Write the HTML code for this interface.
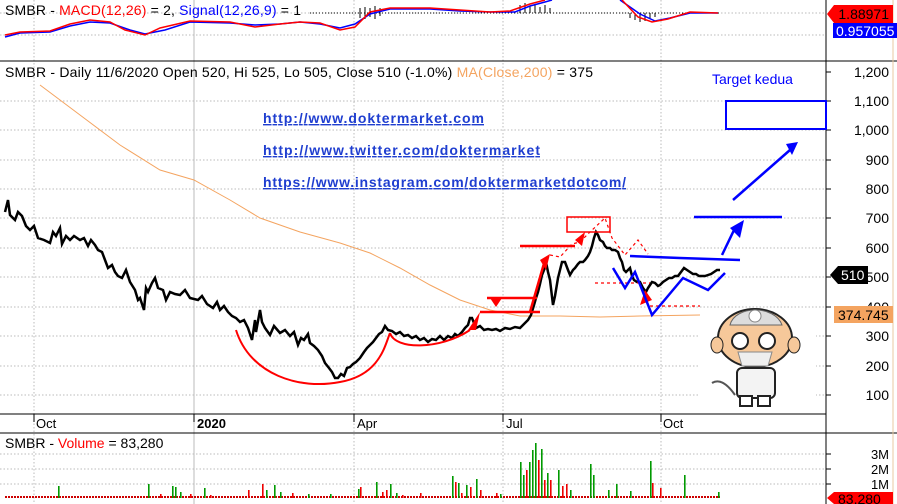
<!DOCTYPE html>
<html><head><meta charset="utf-8"><style>
html,body{margin:0;padding:0;background:#fff;}
svg{display:block;font-family:"Liberation Sans",Arial,sans-serif;}
</style></head><body>
<svg width="897" height="504" viewBox="0 0 897 504" xmlns="http://www.w3.org/2000/svg">
<rect width="897" height="504" fill="#fff"/>
<g stroke="#bbb" stroke-dasharray="1.5,2" stroke-width="1">
<line x1="34" y1="0" x2="34" y2="504"/><line x1="354" y1="0" x2="354" y2="504"/>
<line x1="503" y1="0" x2="503" y2="504"/><line x1="661" y1="0" x2="661" y2="504"/>
<line x1="0" y1="13" x2="826" y2="13"/><line x1="0" y1="35" x2="826" y2="35"/>
<line x1="0" y1="101" x2="826" y2="101"/><line x1="0" y1="130" x2="826" y2="130"/>
<line x1="0" y1="160" x2="826" y2="160"/><line x1="0" y1="189" x2="826" y2="189"/>
<line x1="0" y1="218" x2="826" y2="218"/><line x1="0" y1="248" x2="826" y2="248"/>
<line x1="0" y1="277" x2="826" y2="277"/><line x1="0" y1="307" x2="826" y2="307"/>
<line x1="0" y1="336" x2="826" y2="336"/><line x1="0" y1="366" x2="826" y2="366"/>
<line x1="0" y1="395" x2="826" y2="395"/>
<line x1="0" y1="454" x2="826" y2="454"/><line x1="0" y1="469" x2="826" y2="469"/><line x1="0" y1="484" x2="826" y2="484"/>
</g>
<line x1="194" y1="0" x2="194" y2="504" stroke="#bbb"/>
<line x1="0" y1="61" x2="897" y2="61" stroke="#000"/>
<line x1="0" y1="414" x2="826" y2="414" stroke="#000"/>
<line x1="0" y1="433" x2="897" y2="433" stroke="#000"/>
<line x1="826" y1="0" x2="826" y2="504" stroke="#000"/>
<line x1="893" y1="0" x2="893" y2="504" stroke="#e8c9a0"/>
<!-- MACD -->
<line x1="310" y1="13" x2="720" y2="13" stroke="#000" stroke-dasharray="1,2"/>
<g stroke="#000" stroke-width="1">
<line x1="360" y1="8" x2="360" y2="18"/><line x1="365" y1="7" x2="365" y2="19"/><line x1="370" y1="8" x2="370" y2="17"/><line x1="375" y1="6" x2="375" y2="19"/><line x1="380" y1="8" x2="380" y2="16"/>
<line x1="520" y1="5" x2="520" y2="13"/><line x1="525" y1="3" x2="525" y2="13"/><line x1="530" y1="6" x2="530" y2="13"/><line x1="535" y1="4" x2="535" y2="13"/><line x1="540" y1="7" x2="540" y2="13"/><line x1="545" y1="5" x2="545" y2="13"/><line x1="550" y1="8" x2="550" y2="13"/>
<line x1="630" y1="13" x2="630" y2="18"/><line x1="635" y1="13" x2="635" y2="20"/><line x1="640" y1="13" x2="640" y2="22"/><line x1="645" y1="13" x2="645" y2="21"/><line x1="650" y1="13" x2="650" y2="19"/><line x1="655" y1="13" x2="655" y2="17"/>
</g>
<polyline fill="none" stroke="#00f" stroke-width="1.5" points="5,37 20,33 50,32 70,26 90,22 110,23 130,30 145,34 165,30 190,22 230,23 255,25 280,24 300,22 320,24 340,28 355,24 370,14 390,9 430,9 460,11 490,12 515,12 530,6 545,2 552,0"/>
<polyline fill="none" stroke="#f00" stroke-width="1.5" points="5,35 20,32 50,31 70,24 90,20 110,22 125,30 145,35 160,28 190,21 230,22 255,27 280,24 300,22 320,23 340,30 355,27 370,12 390,8 430,8 460,10 490,12 510,11 530,4 545,0"/>
<polyline fill="none" stroke="#00f" stroke-width="1.5" points="620,0 640,14 655,21 670,18 690,13 718,13"/>
<polyline fill="none" stroke="#f00" stroke-width="1.5" points="622,0 638,17 652,22 668,19 690,12 718,13"/>
<text x="5" y="15" font-size="14" fill="#000" textLength="296">SMBR - <tspan fill="#f00">MACD(12,26)</tspan> = 2, <tspan fill="#00f">Signal(12,26,9)</tspan> = 1</text>
<polygon points="834,5 893,5 893,23 834,23 827,14" fill="#f00"/>
<text x="889" y="19" font-size="14" fill="#000" text-anchor="end">1.88971</text>
<rect x="833" y="23" width="64" height="15" fill="#00f"/>
<text x="836" y="36" font-size="14" fill="#fff">0.957055</text>
<text x="5" y="77" font-size="14" fill="#000" textLength="588">SMBR - Daily 11/6/2020 Open 520, Hi 525, Lo 505, Close 510 (-1.0%) <tspan fill="#f4a460">MA(Close,200)</tspan> = 375</text>
<g font-size="14" fill="#000" text-anchor="end">
<text x="889" y="77">1,200</text><text x="889" y="106">1,100</text><text x="889" y="135">1,000</text>
<text x="889" y="165">900</text><text x="889" y="194">800</text><text x="889" y="223">700</text>
<text x="889" y="253">600</text><text x="889" y="282">500</text><text x="889" y="312">400</text>
<text x="889" y="341">300</text><text x="889" y="371">200</text><text x="889" y="400">100</text>
</g>
<g stroke="#000"><line x1="826" y1="72" x2="831" y2="72"/><line x1="826" y1="101" x2="831" y2="101"/><line x1="826" y1="130" x2="831" y2="130"/><line x1="826" y1="160" x2="831" y2="160"/><line x1="826" y1="189" x2="831" y2="189"/><line x1="826" y1="218" x2="831" y2="218"/><line x1="826" y1="248" x2="831" y2="248"/><line x1="826" y1="277" x2="831" y2="277"/><line x1="826" y1="307" x2="831" y2="307"/><line x1="826" y1="336" x2="831" y2="336"/><line x1="826" y1="366" x2="831" y2="366"/><line x1="826" y1="395" x2="831" y2="395"/></g>
<polygon points="838,266 868,266 868,284 838,284 830,275" fill="#000"/>
<text x="841" y="280" font-size="14" fill="#fff">510</text>
<rect x="834" y="306" width="59" height="17" fill="#f4a460"/>
<text x="838" y="320" font-size="14" fill="#000">374.745</text>
<g font-size="14" font-weight="bold" fill="#1f3ed0" text-decoration="underline">
<text x="263" y="123" textLength="221">http://www.doktermarket.com</text>
<text x="263" y="155" textLength="277">http://www.twitter.com/doktermarket</text>
<text x="263" y="187" textLength="363">https://www.instagram.com/doktermarketdotcom/</text>
</g>
<text x="712" y="84" font-size="14" fill="#00f">Target kedua</text>
<rect x="726" y="101" width="100" height="28" fill="none" stroke="#00f" stroke-width="2"/>
<polyline fill="none" stroke="#f4a460" stroke-width="1" points="40,85 80,115 120,145 160,170 194,180 230,200 260,218 300,232 340,243 370,253 400,268 430,285 460,300 490,310 520,316 560,316 600,317 640,316 700,315"/>
<polyline fill="none" stroke="#000" stroke-width="2.5" points="5,212 8,200 10,215 15,220 18,212 22,216 26,226 30,230 34,226 38,238 44,240 50,243 53,232 56,236 60,228 62,244 66,236 70,240 74,236 80,240 84,238 88,246 91,240 95,245 98,250 102,252 105,260 108,268 112,265 115,272 118,276 122,278 126,270 130,282 135,290 138,300 140,298 144,310 146,288 148,292 152,283 155,278 158,288 163,290 166,300 170,292 175,294 180,295 185,290 190,298 198,300 202,296 207,304 213,308 217,302 220,310 224,306 228,312 232,316 236,318 240,322 244,320 248,328 252,340 255,320 256,332 260,310 262,322 265,328 270,335 274,326 280,333 285,330 290,336 294,332 298,345 301,338 304,340 308,334 310,343 314,346 318,350 322,356 325,363 329,368 332,372 335,378 338,378 341,374 344,376 347,368 350,367 353,364 356,362 360,358 364,352 367,348 370,345 373,342 376,338 379,334 382,332 385,326 388,330 392,331 396,334 400,332 404,336 408,335 412,338 416,336 420,340 424,338 428,342 432,339 436,340 440,336 444,340 448,336 452,338 455,334 458,336 462,332 465,328 468,325 470,318 472,318 476,328 480,326 484,330 488,329 492,330 496,329 500,331 505,328 510,329 515,327 520,328 524,324 528,320 531,315 534,305 536,298 538,292 540,284 542,275 544,270 546,262 548,272 550,280 553,305 555,296 556,290 558,278 560,270 562,262 565,262 568,270 570,275 573,270 575,268 578,264 580,262 583,262 585,260 588,256 590,252 592,246 594,238 596,232 598,235 600,240 603,242 605,246 607,248 610,248 612,250 615,250 618,252 620,258 622,262 624,270 626,272 628,270 630,268 632,276 634,280 637,282 640,282 643,288 646,292 648,288 650,285 652,282 655,283 658,286 660,285 663,282 666,280 669,278 672,278 675,276 678,276 681,272 684,268 687,270 690,272 693,274 696,274 699,276 702,276 705,276 708,275 711,274 714,272 717,270 720,270"/>
<path d="M236,330 C250,375 300,390 340,382 C380,375 385,345 390,333" fill="none" stroke="#f00" stroke-width="2"/>
<path d="M390,333 C395,350 440,350 470,330" fill="none" stroke="#f00" stroke-width="2"/>
<polygon points="468,330 480,312 476,330" fill="#f00"/>
<g stroke="#f00" stroke-width="2.5" fill="none">
<line x1="487" y1="298" x2="537" y2="298"/><line x1="480" y1="312" x2="540" y2="312"/>
<line x1="520" y1="246" x2="575" y2="246"/>
<line x1="530" y1="312" x2="545" y2="260"/>
</g>
<polygon points="490,298 496,307 502,298" fill="#f00"/>
<polygon points="540,260 550,254 546,270" fill="#f00"/>
<polygon points="575,240 585,232 582,246" fill="#f00"/>
<rect x="567" y="217" width="43" height="15" fill="none" stroke="#f00" stroke-width="1.5"/>
<g stroke="#f00" stroke-width="1.2" fill="none" stroke-dasharray="3,3">
<polyline points="550,255 560,257 572,244 580,242 590,232 605,218 612,238 625,255 638,240 648,254"/>
<line x1="595" y1="283" x2="650" y2="283"/><line x1="650" y1="306" x2="700" y2="306"/>
</g>
<polygon points="645,290 652,300 640,305" fill="#f00"/>
<g stroke="#00f" stroke-width="2.5" fill="none">
<polyline points="613,268 625,288 635,272 652,315 683,278 708,290 725,273"/>
<polyline points="630,256 680,258 740,260"/>
<line x1="694" y1="217" x2="782" y2="217"/>
<line x1="722" y1="255" x2="735" y2="228"/>
<line x1="733" y1="200" x2="790" y2="150"/>
</g>
<polygon points="730,228 744,220 740,238" fill="#00f"/>
<polygon points="786,144 798,142 792,155" fill="#00f"/>
<!-- mascot -->
<rect x="700" y="308" width="116" height="102" fill="#fff"/>
<ellipse cx="755" cy="338" rx="37" ry="29" fill="#f6c89a" stroke="#222" stroke-width="2"/>
<path d="M730,325 C735,305 775,305 782,325 Z" fill="#ddd" stroke="#666"/>
<circle cx="755" cy="316" r="6" fill="#fff" stroke="#888"/>
<circle cx="740" cy="341" r="8" fill="#fff" stroke="#222" stroke-width="2"/>
<circle cx="767" cy="341" r="8" fill="#fff" stroke="#222" stroke-width="2"/>
<path d="M738,352 L772,352 L768,366 L742,366 Z" fill="#eee" stroke="#888"/>
<ellipse cx="717" cy="345" rx="6" ry="8" fill="#f6c89a" stroke="#222"/>
<ellipse cx="794" cy="345" rx="6" ry="8" fill="#f6c89a" stroke="#222"/>
<rect x="737" y="368" width="38" height="30" rx="5" fill="#f3f3f3" stroke="#222" stroke-width="2"/>
<rect x="740" y="396" width="12" height="10" fill="#fff" stroke="#222" stroke-width="2"/>
<rect x="758" y="396" width="12" height="10" fill="#fff" stroke="#222" stroke-width="2"/>
<path d="M712,383 C720,378 728,385 735,395" fill="none" stroke="#555" stroke-width="2"/>
<g stroke="#000"><line x1="34" y1="414" x2="34" y2="422"/><line x1="194" y1="414" x2="194" y2="422"/><line x1="354" y1="414" x2="354" y2="422"/><line x1="503" y1="414" x2="503" y2="422"/><line x1="661" y1="414" x2="661" y2="422"/></g>
<g font-size="13" fill="#000"><text x="36" y="428">Oct</text><text x="197" y="428" font-weight="bold">2020</text><text x="357" y="428">Apr</text><text x="506" y="428">Jul</text><text x="663" y="428">Oct</text></g>
<text x="5" y="448" font-size="14" fill="#000">SMBR - <tspan fill="#f00">Volume</tspan> = 83,280</text>
<g font-size="13" fill="#000" text-anchor="end"><text x="889" y="459">3M</text><text x="889" y="474">2M</text><text x="889" y="489">1M</text></g>
<g stroke="#000"><line x1="826" y1="454" x2="831" y2="454"/><line x1="826" y1="469" x2="831" y2="469"/><line x1="826" y1="484" x2="831" y2="484"/></g>
<!-- volume bars -->
<line x1="5" y1="497" x2="720" y2="497" stroke="#c00" stroke-width="2" stroke-dasharray="2,1"/>
<g fill="#090">
<rect x="58" y="486" width="1.6" height="12"/><rect x="148" y="484" width="1.6" height="14"/><rect x="172" y="486" width="1.6" height="12"/><rect x="175" y="487" width="1.6" height="11"/><rect x="180" y="492" width="1.6" height="6"/><rect x="204" y="488" width="1.6" height="10"/><rect x="266" y="490" width="1.6" height="8"/><rect x="274" y="485" width="1.6" height="13"/><rect x="280" y="492" width="1.6" height="6"/><rect x="308" y="494" width="1.6" height="4"/><rect x="330" y="494" width="1.6" height="4"/><rect x="358" y="489" width="1.6" height="9"/><rect x="376" y="482" width="1.6" height="16"/><rect x="390" y="484" width="1.6" height="14"/><rect x="396" y="493" width="1.6" height="5"/><rect x="452" y="476" width="1.6" height="22"/><rect x="458" y="483" width="1.6" height="15"/><rect x="466" y="485" width="1.6" height="13"/><rect x="476" y="479" width="1.6" height="19"/><rect x="520" y="462" width="1.6" height="36"/><rect x="523" y="475" width="1.6" height="23"/><rect x="529" y="462" width="1.6" height="36"/><rect x="532" y="450" width="1.6" height="48"/><rect x="535" y="443" width="1.6" height="55"/><rect x="541" y="449" width="1.6" height="49"/><rect x="547" y="473" width="1.6" height="25"/><rect x="558" y="470" width="1.6" height="28"/><rect x="590" y="464" width="1.6" height="34"/><rect x="593" y="475" width="1.6" height="23"/><rect x="608" y="490" width="1.6" height="8"/><rect x="616" y="484" width="1.6" height="14"/><rect x="650" y="461" width="1.6" height="37"/><rect x="684" y="475" width="1.6" height="23"/><rect x="718" y="492" width="1.6" height="6"/><rect x="500" y="494" width="1.6" height="4"/><rect x="570" y="490" width="1.6" height="8"/><rect x="630" y="491" width="1.6" height="7"/>
</g>
<g fill="#e00">
<rect x="160" y="494" width="1.6" height="4"/><rect x="190" y="494" width="1.6" height="4"/><rect x="210" y="495" width="1.6" height="3"/><rect x="248" y="490" width="1.6" height="8"/><rect x="262" y="484" width="1.6" height="14"/><rect x="292" y="493" width="1.6" height="5"/><rect x="360" y="487" width="1.6" height="11"/><rect x="382" y="492" width="1.6" height="6"/><rect x="386" y="490" width="1.6" height="8"/><rect x="402" y="495" width="1.6" height="3"/><rect x="420" y="493" width="1.6" height="5"/><rect x="455" y="482" width="1.6" height="16"/><rect x="461" y="493" width="1.6" height="5"/><rect x="470" y="487" width="1.6" height="11"/><rect x="480" y="490" width="1.6" height="8"/><rect x="496" y="493" width="1.6" height="5"/><rect x="526" y="470" width="1.6" height="28"/><rect x="538" y="460" width="1.6" height="38"/><rect x="544" y="480" width="1.6" height="18"/><rect x="550" y="480" width="1.6" height="18"/><rect x="562" y="486" width="1.6" height="12"/><rect x="566" y="484" width="1.6" height="14"/><rect x="652" y="483" width="1.6" height="15"/><rect x="660" y="488" width="1.6" height="10"/>
</g>
<polygon points="834,492 893,492 893,504 834,504 827,498" fill="#f00"/>
<text x="838" y="504" font-size="14" fill="#000">83,280</text>
</svg>
</body></html>
